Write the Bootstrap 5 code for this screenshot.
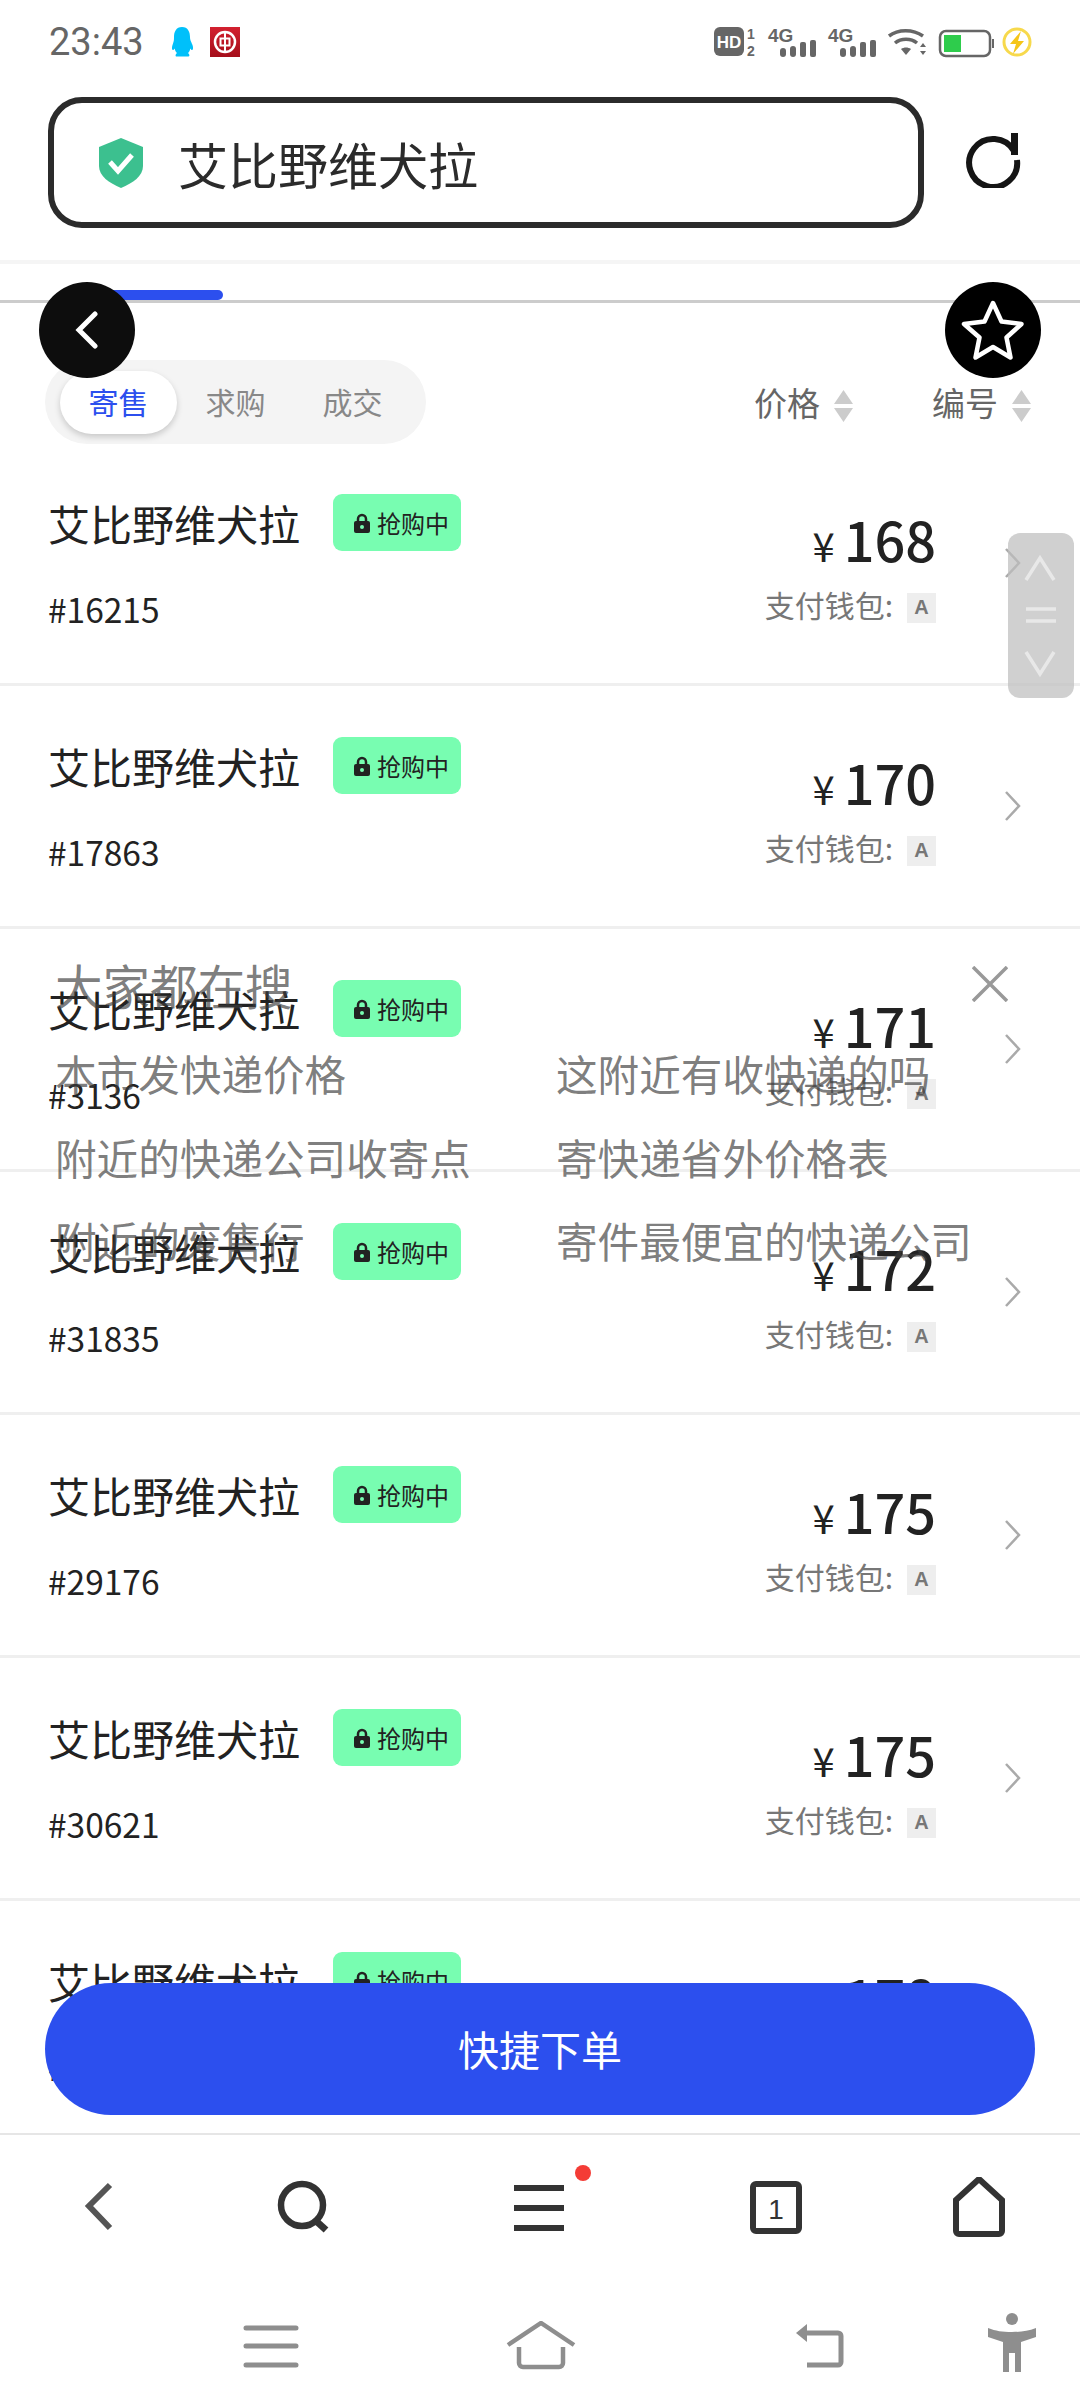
<!DOCTYPE html>
<html lang="zh-CN">
<head>
  <meta charset="UTF-8">
  <title>艾比野维犬拉</title>
  <link href="https://cdn.jsdelivr.net/npm/bootstrap@5.3.0/dist/css/bootstrap.min.css" rel="stylesheet">
  <style>
    body { margin: 0; background: #fff; font-family: "Noto Sans CJK SC", "Liberation Sans", sans-serif; color: #222; }
    .screen { position: relative; width: 1080px; height: 2408px; overflow: hidden; background: #fff; }
    .status-bar { height: 70px; padding: 27px 46px 0 49px; }
    .clock { font-family: Roboto, sans-serif; font-size: 38px; line-height: 30px; color: #666; width: 121px; }
    .status-right { margin-top: -6px; }
    .addr-wrap { height: 194px; padding: 27px 0 0 48px; border-bottom: 4px solid #f5f5f5; }
    .addr-box { width: 876px; height: 131px; border: 6px solid #2b2b2b; border-radius: 34px; padding-left: 43px; }
    .addr-text { font-size: 50px; line-height: 1; margin-left: 33px; color: #2b2b2b; }
    .refresh { margin: 31px 0 0 40px; }
    .tab-strip { height: 39px; padding: 26px 0 0 110px; border-bottom: 3px solid #ccc; }
    .tab-ind { width: 113px; height: 10px; background: #2c4fee; border-radius: 0 5px 5px 0; }
    .filter-row { height: 140px; padding: 57px 49px 0 45px; }
    .seg { width: 381px; height: 84px; background: #f4f4f4; border-radius: 42px; padding: 11px 0 0 15px; }
    .seg-item { width: 117px; height: 63px; line-height: 60px; text-align: center; font-size: 30px; color: #888; }
    .seg-item.on { background: #fff; color: #2c4fee; border-radius: 32px; box-shadow: 0 3px 6px rgba(0,0,0,.18); }
    .sort-lbl { font-size: 33px; line-height: 84px; color: #666; }
    .sort-tri { margin: 30px 0 0 14px; }
    .sort-a { margin-right: 79px; }
    .rows { height: 1690px; overflow: hidden; }
    .item-row { height: 243px; padding: 51px 59px 0 48px; border-bottom: 3px solid #efefef; }
    .item-name { font-size: 42px; line-height: 57px; }
    .tag-live { width: 128px; height: 57px; background: #78fdb1; border-radius: 9px; margin-left: 33px; font-size: 24px; color: #222; padding-left: 21px; gap: 7px; }
    .item-id { font-size: 33.5px; line-height: 40px; margin-top: 38px; }
    .price-col { width: 190px; text-align: right; padding-top: 9px; }
    .price-line { line-height: 72px; font-weight: 500; font-size: 54px; }
    .price-cny { font-size: 40px; margin-right: 9px; font-weight: 400; }
    .wallet-line { font-size: 30px; line-height: 36px; color: #777; margin-top: 5px; white-space: nowrap; }
    .wallet-a { display: inline-block; width: 29px; height: 30px; line-height: 28px; text-align: center; background: #eee; color: #777; font-size: 20px; font-weight: 700; margin-left: 14px; vertical-align: 3px; font-family: "Liberation Sans", sans-serif; }
    .chev { margin: 54px 0 0 69px; }
    .round-btn { position: absolute; top: 282px; width: 96px; height: 96px; border-radius: 50%; background: #0d0d0d; }
    .round-back { left: 39px; }
    .round-star { left: 945px; background: #000; }
    .side-scroll { position: absolute; left: 1008px; top: 533px; width: 66px; height: 165px; background: rgba(190,190,190,.72); border-radius: 12px; }
    .hot-panel { position: absolute; left: 55px; top: 955px; width: 960px; color: rgba(60,60,60,.68); }
    .hot-title { font-size: 47.5px; line-height: 60px; }
    .hot-grid { display: grid; grid-template-columns: 501px 1fr; row-gap: 27.5px; margin-top: 30px; font-size: 41.6px; line-height: 56px; white-space: nowrap; }
    .hot-close { position: absolute; left: 917px; top: 11px; }
    .order-btn { position: absolute; left: 45px; top: 1983px; width: 990px; height: 132px; border: 0; border-radius: 66px; background: #2c4fee; color: #fff; font-size: 41px; }
    .app-nav { position: relative; height: 275px; background: #fff; border-top: 2px solid #e6e6e6; }
    .app-icons { display: grid; grid-template-columns: 204px 236px 237px 203px 60px; padding: 42px 0 0 69px; }
    .menu-dot { position: absolute; left: 575px; top: 30px; width: 16px; height: 16px; border-radius: 50%; background: #f43c36; }
    .sys-icons { display: grid; grid-template-columns: 265px 287px 189px 60px; padding: 84px 0 0 241px; }
    .sys-person { margin-top: -8px; }
  </style>
</head>
<body>
  <div class="screen">
    <div class="status-bar d-flex justify-content-between">
      <div class="d-flex">
        <div class="clock">23:43</div>
        <svg width="24" height="30" viewBox="0 0 24 30"><path d="M12 0c6 0 8 5 8 10 0 3 1 4 2.500 8 1 3 .5 5-.5 5-.6 0-1.200-.6-1.700-1.500-.4 2-1.200 3.500-2.300 4.500 1.500 1 2 3 .5 3.500H6.500C5 29.500 5.500 27 7 26c-1.100-1-2-2.500-2.300-4.500C4.200 22.400 3.600 23 3 23c-1 0-1.500-2-.5-5C4 14 4 13 4 10 4 5 6 0 12 0z" fill="#00c0fa"/></svg>
        <svg class="ms-3" width="30" height="30" viewBox="0 0 30 30">
          <defs><linearGradient id="bank" x1="0" y1="0" x2="0" y2="1"><stop offset="0" stop-color="#d3202f"/><stop offset="1" stop-color="#a50e1b"/></linearGradient></defs>
          <rect x="0" y="0" width="30" height="30" fill="url(#bank)"/>
          <circle cx="15" cy="15" r="10" fill="none" stroke="#fff" stroke-width="2.500"/>
          <rect x="10.500" y="11.500" width="9" height="7" fill="none" stroke="#fff" stroke-width="2"/>
          <path d="M15 5v20" stroke="#fff" stroke-width="2"/>
        </svg>
      </div>
      <svg class="status-right" width="320" height="38" viewBox="0 -6 320 38">
        <rect x="0" y="0" width="30" height="29" rx="6" fill="#666"/>
        <text x="15" y="21" text-anchor="middle" font-family="Liberation Sans" font-weight="700" font-size="17" fill="#fff">HD</text>
        <text x="33" y="12" font-family="Liberation Sans" font-weight="700" font-size="14" fill="#666">1</text>
        <text x="33" y="29" font-family="Liberation Sans" font-weight="700" font-size="14" fill="#666">2</text>
        <text x="54" y="15" font-family="Liberation Sans" font-weight="700" font-size="19" fill="#666">4G</text>
        <g fill="#666"><rect x="66" y="21" width="6" height="9" rx="3"/><rect x="76" y="19" width="6" height="11" rx="3"/><rect x="86" y="15" width="6" height="15" rx="2"/><rect x="96" y="13" width="6" height="17" rx="2"/></g>
        <text x="114" y="15" font-family="Liberation Sans" font-weight="700" font-size="19" fill="#666">4G</text>
        <g fill="#666"><rect x="126" y="21" width="6" height="9" rx="3"/><rect x="136" y="19" width="6" height="11" rx="3"/><rect x="146" y="15" width="6" height="15" rx="2"/><rect x="156" y="13" width="6" height="17" rx="2"/></g>
        <g fill="none" stroke="#666" stroke-width="3.500"><path d="M175 9c9-7 24-7 34 0"/><path d="M181 16c6-5 16-5 22 0"/></g>
        <path d="M187 22c3-2 7-2 10 0l-5 6z" fill="#666"/>
        <path d="M206 20l3-4 3 4zM206 24h6l-3 4z" fill="#666"/>
        <rect x="226" y="4" width="50" height="25" rx="6" fill="#fff" stroke="#666" stroke-width="2.500"/>
        <rect x="230" y="8" width="17" height="17" fill="#2ecc4c"/>
        <rect x="278" y="12" width="2" height="9" fill="#666"/>
        <circle cx="303" cy="15" r="13" fill="none" stroke="#f7d94c" stroke-width="3"/>
        <path d="M307 4l-11 13h6l-3 10 11-13h-6z" fill="#f5c518"/>
      </svg>
    </div>

    <div class="addr-wrap d-flex align-items-start">
      <div class="addr-box d-flex align-items-center">
        <svg width="48" height="50" viewBox="0 0 48 50">
          <path d="M24 0l22 9v19c0 10-10 17-22 22C12 45 2 38 2 28V9z" fill="#3cc08f"/>
          <path d="M13 24l8 9 14-16" fill="none" stroke="#fff" stroke-width="5"/>
        </svg>
        <div class="addr-text">艾比野维犬拉</div>
      </div>
      <svg class="refresh" width="60" height="60" viewBox="0 0 60 60">
        <path d="M50 23A24 24 0 1 0 53 32" fill="none" stroke="#151515" stroke-width="6"/>
        <path d="M47 5h7v22h-7z" fill="#151515"/>
      </svg>
    </div>

    <div class="tab-strip"><div class="tab-ind"></div></div>

    <div class="filter-row d-flex align-items-start">
      <div class="seg d-flex">
        <div class="seg-item on">寄售</div>
        <div class="seg-item">求购</div>
        <div class="seg-item">成交</div>
      </div>
      <div class="d-flex ms-auto">
        <div class="sort-lbl">价格</div>
        <svg class="sort-tri sort-a" width="19" height="32" viewBox="0 0 19 32"><path d="M9.500 0L19 14H0zM0 18h19L9.500 32z" fill="#ccc"/></svg>
        <div class="sort-lbl">编号</div>
        <svg class="sort-tri" width="19" height="32" viewBox="0 0 19 32"><path d="M9.500 0L19 14H0zM0 18h19L9.500 32z" fill="#ccc"/></svg>
      </div>
    </div>

    <div class="rows" id="rows"></div>

    <div class="app-nav">
      <div class="app-icons">
        <svg width="60" height="60" viewBox="0 0 60 60"><path d="M41 9L20 30l21 22" transform="translate(0 -1)" fill="none" stroke="#555" stroke-width="6"/></svg>
        <svg width="60" height="60" viewBox="0 0 60 60"><circle cx="29" cy="28" r="21" fill="none" stroke="#333" stroke-width="6.500"/><path d="M42 43l11 10" stroke="#333" stroke-width="7"/></svg>
        <svg width="60" height="60" viewBox="0 0 60 60"><path d="M5 11h50M5 31h50M5 51h50" stroke="#333" stroke-width="6"/></svg>
        <svg width="60" height="60" viewBox="0 0 60 60"><rect x="7" y="7" width="46" height="47" rx="3" fill="none" stroke="#333" stroke-width="6"/><text x="30" y="42" text-anchor="middle" font-family="Liberation Sans" font-size="28" fill="#333">1</text></svg>
        <svg width="60" height="60" viewBox="0 0 60 60"><path d="M7 21L30 0l23 21v31a3 3 0 0 1-3 3H10a3 3 0 0 1-3-3z" transform="translate(0 2)" fill="none" stroke="#333" stroke-width="6"/></svg>
      </div>
      <div class="menu-dot"></div>
      <div class="sys-icons">
        <svg width="60" height="50" viewBox="0 0 60 50"><path d="M5 7h50M5 25h50M5 44h50" stroke="#8e8e8e" stroke-width="5" stroke-linecap="round"/></svg>
        <svg width="70" height="50" viewBox="0 0 70 50"><path d="M2 24L35 2l33 22" fill="none" stroke="#8e8e8e" stroke-width="4.500"/><path d="M13 26v16a4 4 0 0 0 4 4h36a4 4 0 0 0 4-4V26" fill="none" stroke="#8e8e8e" stroke-width="4.500"/></svg>
        <svg width="60" height="50" viewBox="0 0 60 50"><path d="M10 12h35a3 3 0 0 1 3 3v26a3 3 0 0 1-3 3H14" fill="none" stroke="#8e8e8e" stroke-width="5"/><path d="M3 12l11-9v18z" fill="#8e8e8e"/></svg>
        <svg class="sys-person" width="60" height="60" viewBox="0 0 60 60"><circle cx="30" cy="6" r="6" fill="#8e8e8e"/><path d="M6 15c8 3 14 4 24 4s16-1 24-4v9l-15 5v30h-6V40h-6v19h-6V29L6 24z" fill="#8e8e8e"/></svg>
      </div>
    </div>

    <div class="hot-panel">
      <div class="hot-title">大家都在搜</div>
      <div class="hot-grid">
        <div>本市发快递价格</div><div>这附近有收快递的吗</div>
        <div>附近的快递公司收寄点</div><div>寄快递省外价格表</div>
        <div>附近的废售行</div><div>寄件最便宜的快递公司</div>
      </div>
      <svg class="hot-close" width="36" height="36" viewBox="0 0 36 36"><path d="M1 1l34 34M35 1L1 35" stroke="#999" stroke-width="3.500"/></svg>
    </div>

    <div class="round-btn round-back d-flex align-items-center justify-content-center">
      <svg width="26" height="38" viewBox="0 0 26 38"><path d="M21 3L5 19l16 16" fill="none" stroke="#fff" stroke-width="5" stroke-linecap="round"/></svg>
    </div>
    <div class="round-btn round-star d-flex align-items-center justify-content-center">
      <svg width="64" height="60" viewBox="0 0 64 60"><path d="M32 3l8.500 18.500 20 2.500-15 13.500 4 20L32 47l-17.500 10.500 4-20L3 24l20.500-2.500z" fill="none" stroke="#fff" stroke-width="4.500" stroke-linejoin="round"/></svg>
    </div>

    <div class="side-scroll">
      <svg width="66" height="165" viewBox="0 0 66 165"><g fill="none" stroke="#e8e8e8" stroke-width="3.500"><path d="M18 47L32 25l14 22"/><path d="M18 76h30M18 88h30"/><path d="M18 119l14 22 14-22"/></g></svg>
    </div>

    <button class="order-btn" type="button">快捷下单</button>
  </div>

  <script>
    const items = [
      ["16215", 168], ["17863", 170], ["3136", 171], ["31835", 172],
      ["29176", 175], ["30621", 175], ["28804", 178]
    ];
    document.getElementById("rows").innerHTML = items.map(([id, price]) => `
      <div class="item-row d-flex">
        <div class="flex-grow-1">
          <div class="d-flex align-items-start">
            <div class="item-name">艾比野维犬拉</div>
            <div class="tag-live d-flex align-items-center">
              <svg width="16" height="20" viewBox="0 0 16 20"><path d="M4 9V6a4 4 0 0 1 8 0v3" fill="none" stroke="#222" stroke-width="2.500"/><rect x="0" y="8" width="16" height="12" rx="2" fill="#222"/><circle cx="8" cy="14" r="2" fill="#78fdb1"/></svg>
              <span>抢购中</span>
            </div>
          </div>
          <div class="item-id">#${id}</div>
        </div>
        <div class="price-col">
          <div class="price-line"><span class="price-cny">¥</span>${price}</div>
          <div class="wallet-line">支付钱包:<span class="wallet-a">A</span></div>
        </div>
        <svg class="chev align-self-start" width="16" height="30" viewBox="0 0 16 30"><path d="M1 1l13 14L1 29" fill="none" stroke="#aaa" stroke-width="2.500"/></svg>
      </div>`).join("");
  </script>
  <script src="https://cdn.jsdelivr.net/npm/bootstrap@5.3.0/dist/js/bootstrap.bundle.min.js"></script>
</body>
</html>
